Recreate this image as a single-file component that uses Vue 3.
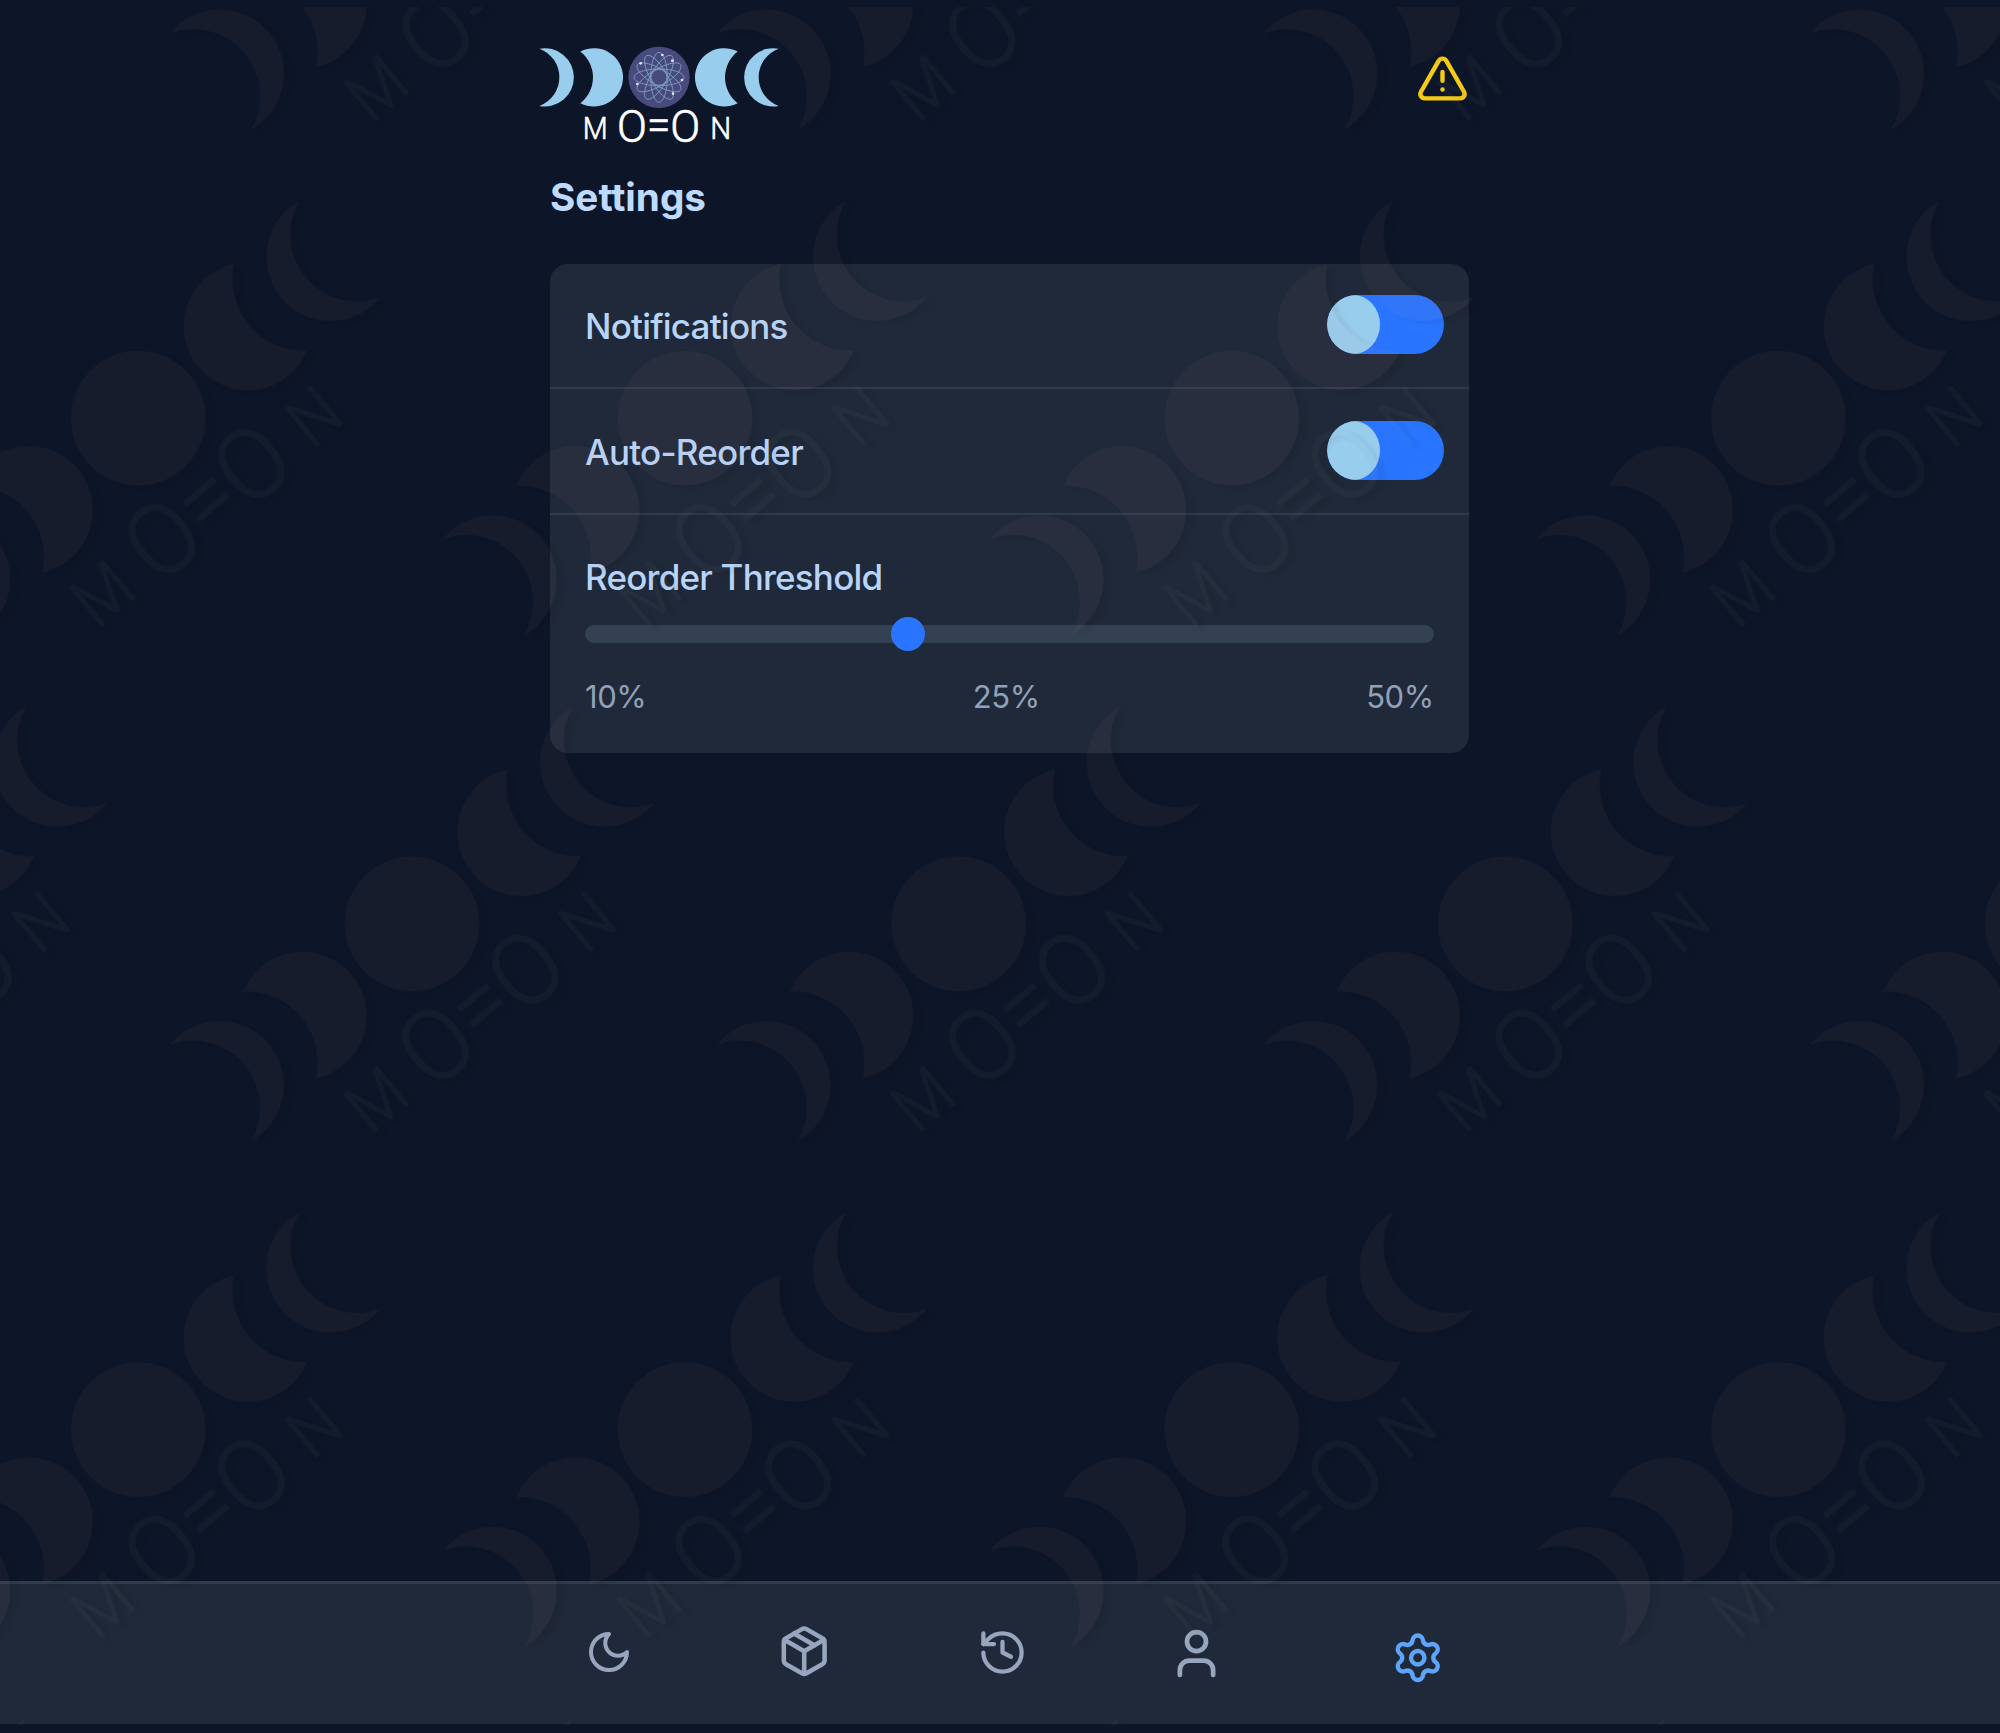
<script setup>
import { ref } from 'vue'

const settings = ref([
  { label: 'Notifications', on: true },
  { label: 'Auto-Reorder', on: true },
])
const marks = ['10%', '25%', '50%']
const threshold = 38

// Watermark tiles: staggered rows, centred on the full moon of each logo
const tiles = []
for (let row = 0; row < 5; row++) {
  const offset = row % 2 ? 138.3 : -134.7
  for (let col = 0; col < 5; col++) {
    tiles.push({ id: `${row}-${col}`, x: offset + col * 546.7, y: -87.6 + row * 505.75 })
  }
}

const orbits = [0, 30, 60, 90, 120, 150]
const electrons = [[10, -67], [40, -50], [69, 8], [42, 49], [-55, -42], [-65, 20]]
</script>

<template>
  <div class="page">
    <svg class="defs" width="0" height="0" aria-hidden="true">
      <defs>
        <g id="moon-phases">
          <path d="M236-77.5A87.5 87.5 0 1 0 236 77.5A98 98 0 0 1 236-77.5Z" />
          <path d="M359-86A87.5 87.5 0 1 0 359 86A91.6 91.6 0 0 1 359-86Z" />
          <path d="M-236-77.5A87.5 87.5 0 1 1-236 77.5A98 98 0 0 0-236-77.5Z" />
          <path d="M-359-86A87.5 87.5 0 1 1-359 86A91.6 91.6 0 0 0-359-86Z" />
        </g>
        <g id="moon-word" font-family="Roboto, sans-serif" font-weight="300">
          <text transform="translate(-229 185) scale(.92 1)" font-size="94">M</text>
          <text transform="translate(-126 195) scale(.98 1)" font-size="135">O</text>
          <text transform="translate(-36 189) scale(.95 1)" font-size="134">=</text>
          <text transform="translate(34 195) scale(.98 1)" font-size="135">O</text>
          <text transform="translate(154 185) scale(.94 1)" font-size="94">N</text>
        </g>
      </defs>
    </svg>

    <main class="main">
      <header class="header">
        <svg class="logo" viewBox="-366 -97 732 303">
          <use href="#moon-phases" class="logo-phase" />
          <circle r="92" class="logo-disc" />
          <g class="logo-orbits">
            <ellipse v-for="a in orbits" :key="a" rx="25" ry="75" :transform="`rotate(${a})`" />
            <circle r="24" />
          </g>
          <circle v-for="(e, i) in electrons" :key="i" :cx="e[0]" :cy="e[1]" r="4" class="logo-electron" />
          <use href="#moon-word" class="logo-word" />
        </svg>
        <svg class="icon alert" viewBox="0 0 24 24">
          <path d="m21.73 18-8-14a2 2 0 0 0-3.48 0l-8 14A2 2 0 0 0 4 21h16a2 2 0 0 0 1.73-3Z" />
          <path d="M12 9v4" />
          <path d="M12 17h.01" />
        </svg>
      </header>

      <h1 class="title">Settings</h1>

      <section class="card">
        <div v-for="s in settings" :key="s.label" class="row">
          <span class="label">{{ s.label }}</span>
          <button class="toggle" type="button" role="switch" :aria-checked="s.on" @click="s.on = !s.on">
            <span class="knob"></span>
          </button>
        </div>
        <div class="threshold">
          <div class="label">Reorder Threshold</div>
          <div class="track">
            <span class="thumb" :style="{ left: threshold + '%' }"></span>
          </div>
          <div class="marks">
            <span v-for="m in marks" :key="m">{{ m }}</span>
          </div>
        </div>
      </section>
    </main>

    <nav class="nav">
      <div class="tabs">
        <svg class="icon tab-moon" viewBox="0 0 24 24">
          <path d="M12 3a6 6 0 0 0 9 9 9 9 0 1 1-9-9Z" />
        </svg>
        <svg class="icon tab-box" viewBox="0 0 24 24">
          <path d="M16.5 9.4 7.5 4.21" />
          <path d="M21 16V8a2 2 0 0 0-1-1.73l-7-4a2 2 0 0 0-2 0l-7 4A2 2 0 0 0 3 8v8a2 2 0 0 0 1 1.73l7 4a2 2 0 0 0 2 0l7-4A2 2 0 0 0 21 16z" />
          <path d="M3.27 6.96 12 12.01l8.73-5.05" />
          <path d="M12 22.08V12" />
        </svg>
        <svg class="icon tab-history" viewBox="0 0 24 24">
          <path d="M3 12a9 9 0 1 0 9-9 9.75 9.75 0 0 0-6.74 2.74L3 8" />
          <path d="M3 3v5h5" />
          <path d="M12 7v5l4 2" />
        </svg>
        <svg class="icon tab-user" viewBox="0 0 24 24">
          <path d="M19 21v-2a4 4 0 0 0-4-4H9a4 4 0 0 0-4 4v2" />
          <circle cx="12" cy="7" r="4" />
        </svg>
        <svg class="icon tab-settings" viewBox="0 0 24 24">
          <path d="M9.671 4.136a2.34 2.34 0 0 1 4.659 0 2.34 2.34 0 0 0 3.319 1.915 2.34 2.34 0 0 1 2.33 4.033 2.34 2.34 0 0 0 0 3.831 2.34 2.34 0 0 1-2.33 4.033 2.34 2.34 0 0 0-3.319 1.915 2.34 2.34 0 0 1-4.659 0 2.34 2.34 0 0 0-3.32-1.915 2.34 2.34 0 0 1-2.33-4.033 2.34 2.34 0 0 0 0-3.831A2.34 2.34 0 0 1 6.35 6.051a2.34 2.34 0 0 0 3.319-1.915" />
          <circle cx="12" cy="12" r="3" />
        </svg>
      </div>
    </nav>

    <svg class="watermark" viewBox="0 7 2000 1718" aria-hidden="true">
      <g class="watermark-ink">
        <g v-for="t in tiles" :key="t.id" :transform="`translate(${t.x} ${t.y}) rotate(-40) scale(.7315)`">
          <use href="#moon-phases" class="watermark-phase" />
          <circle r="92" class="watermark-phase" />
          <use href="#moon-word" class="watermark-word" />
        </g>
      </g>
    </svg>
  </div>
</template>

<style>
body {
  background: #0d1628;
}
</style>

<style scoped>
.page {
  position: relative;
  display: flex;
  flex-direction: column;
  box-sizing: border-box;
  height: 1733px;
  padding-bottom: 9px;
  overflow: hidden;
  background: #0d1628;
  font-family: Inter, "Liberation Sans", sans-serif;
}

.defs {
  position: absolute;
}

.main {
  flex: 1;
  width: 919px;
  margin-left: 550px;
}

.header {
  display: flex;
  justify-content: space-between;
  align-items: flex-start;
  height: 172.5px;
  box-sizing: border-box;
  padding-top: 45px;
}

.logo {
  width: 244px;
  height: 101px;
  margin-left: -13.5px;
}

.logo-phase {
  fill: #99cdee;
}

.logo-disc {
  fill: #484a7b;
}

.logo-orbits {
  fill: none;
  stroke: #85b4da;
  stroke-width: 2.6;
  opacity: 0.8;
}

.logo-electron {
  fill: #e4e6f2;
}

.logo-word {
  fill: #ffffff;
  stroke: #ffffff;
  stroke-width: 2;
}

.icon {
  display: block;
  flex: none;
  fill: none;
  stroke: currentColor;
  stroke-width: 2;
  stroke-linecap: round;
  stroke-linejoin: round;
}

.alert {
  width: 53px;
  height: 53px;
  margin: 6.8px 0.4px 0 0;
  color: #f5cb14;
}

.title {
  margin: 0 0 43px;
  font-size: 38.7px;
  line-height: 48px;
  font-weight: 700;
  color: #bedbff;
}

.card {
  box-sizing: border-box;
  height: 489.5px;
  border-radius: 18px;
  overflow: hidden;
  background: #1f2939;
}

.row {
  display: flex;
  justify-content: space-between;
  align-items: center;
  box-sizing: border-box;
  height: 125.7px;
  padding: 1px 25px 0 35px;
  border-bottom: 2px solid #2f3b4c;
}

.label {
  font-size: 35px;
  line-height: 44px;
  font-weight: 500;
  letter-spacing: -0.78px;
  color: #b8d4f8;
}

.toggle {
  display: block;
  width: 117px;
  height: 59px;
  margin: 0 0 3px;
  padding: 0;
  border: 0;
  border-radius: 30px;
  overflow: hidden;
  background: #2975ff;
}

.knob {
  display: block;
  width: 53px;
  height: 59px;
  border-radius: 50%;
  background: #99cdee;
}

.threshold {
  padding: 40.4px 35.3px 0 35px;
}

.track {
  position: relative;
  height: 18px;
  margin-top: 26px;
  border-radius: 9px;
  background: #334152;
}

.thumb {
  position: absolute;
  top: 50%;
  width: 34px;
  height: 34px;
  border-radius: 50%;
  background: #2975ff;
  transform: translate(-50%, -50%);
}

.marks {
  display: flex;
  justify-content: space-between;
  margin-top: 33.5px;
  font-size: 31px;
  line-height: 40px;
  letter-spacing: -0.45px;
  color: #90a1b9;
}

.nav {
  box-sizing: border-box;
  height: 143.5px;
  border-top: 3px solid #2f3b4c;
  background: #1f2939;
}

.tabs {
  display: flex;
  align-items: flex-start;
  padding: 40.5px 0 0 585px;
  color: #97a5bd;
}

.tab-moon {
  width: 48px;
  height: 48px;
  margin-top: 3.5px;
}

.tab-box {
  width: 54.4px;
  height: 54.4px;
  margin: 0.3px 0 0 143.8px;
}

.tab-history {
  width: 51px;
  height: 51px;
  margin: 2.5px 0 0 145.6px;
}

.tab-user {
  width: 57px;
  height: 57px;
  margin: 1px 0 0 140.7px;
}

.tab-settings {
  width: 53.5px;
  height: 53.5px;
  margin: 6.7px 0 0 165.5px;
  color: #5ea4fa;
}

.watermark {
  position: absolute;
  top: 7px;
  left: 0;
  width: 2000px;
  height: 1718px;
  pointer-events: none;
}

.watermark-ink {
  opacity: 0.056;
  filter: drop-shadow(7px 3px 2px #000000);
}

.watermark-phase {
  fill: #c09698;
}

.watermark-word {
  fill: #808f94;
  stroke: #808f94;
  stroke-width: 2;
  stroke-linejoin: round;
}
</style>
